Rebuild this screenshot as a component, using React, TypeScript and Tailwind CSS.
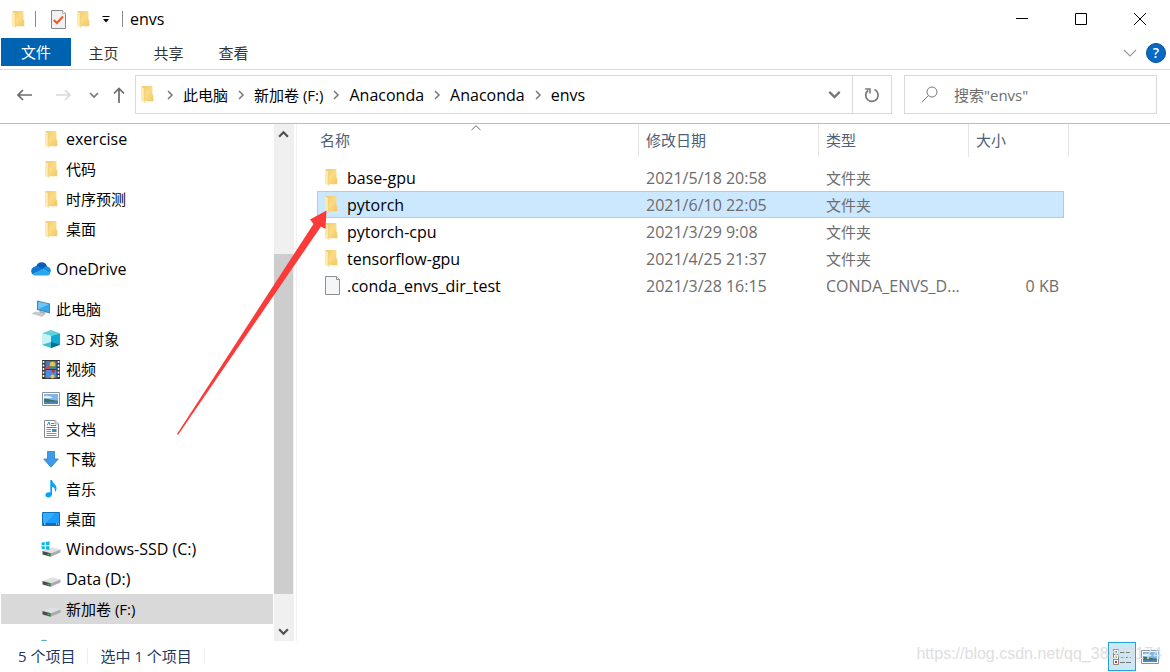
import type { ReactNode } from "react";
import clsx from "clsx";

type IconProps = { className?: string };

function FolderIcon({ className }: IconProps) {
  return (
    <svg className={clsx("shrink-0", className)} width="13" height="17" viewBox="0 0 13 17" aria-hidden="true">
      <defs>
        <linearGradient id="folder-body" x1="0" y1="0" x2="1" y2="1">
          <stop offset="0" stopColor="#efc968" />
          <stop offset="0.5" stopColor="#fbdb85" />
          <stop offset="1" stopColor="#f0c862" />
        </linearGradient>
      </defs>
      <path d="M0.5 0H11.4V8.6L12.3 9.6V15.3H3.5Z" fill="url(#folder-body)" />
      <path d="M0 0.4L3.4 2.6V11L3.8 16.8L0 14.9Z" fill="#ffe9ae" />
      <path d="M3.4 2.6V11L3.8 16.8" fill="none" stroke="#eac566" strokeWidth="0.5" />
    </svg>
  );
}

function FileIcon() {
  return (
    <svg className="shrink-0" width="15" height="19" viewBox="0 0 15 19" aria-hidden="true">
      <path d="M0.5 0.5H11.5L14.5 3.5V18.5H0.5Z" fill="#f5f6f7" stroke="#8f8f8f" />
      <path d="M11.5 0.5V3.5H14.5" fill="#fff" stroke="#8f8f8f" />
    </svg>
  );
}

function PropertiesIcon() {
  return (
    <svg width="15" height="19" viewBox="0 0 15 19" aria-hidden="true">
      <path d="M0.5 0.5H11.5L14.5 3.5V18.5H0.5Z" fill="#f0f1f4" stroke="#888" />
      <path d="M11.5 0.5V3.5H14.5" fill="#fff" stroke="#999" strokeWidth="0.8" />
      <path d="M2.7 10L5.8 13L12 6.5" fill="none" stroke="#f0561d" strokeWidth="2" />
    </svg>
  );
}

function OneDriveIcon() {
  return (
    <svg width="20" height="14" viewBox="0 0 20 14" aria-hidden="true">
      <path d="M5 5C5.6 2 8 0.3 10.7 0.3C13.4 0.3 15.2 1.8 16 4.4L10.5 8Z" fill="#0a5db5" />
      <path d="M6 4.2C2.7 4 0.2 6.2 0.2 9C0.2 10.4 0.7 11.5 1.5 12.3L12.5 7.5C10.5 5.7 8.5 4.5 6 4.2Z" fill="#0f78d4" />
      <path d="M11.8 7C13.2 4.8 15 4 16.4 4.4C18.6 5 19.9 6.7 19.9 8.9L18.8 11.5Z" fill="#1490df" />
      <path d="M1.5 12.3L11.6 7L19.3 11.4C18.7 12.9 17.5 13.5 16 13.5H4.5C3.2 13.5 2.2 13.1 1.5 12.3Z" fill="#28a8ea" />
    </svg>
  );
}

function ThisPcIcon() {
  return (
    <svg width="20" height="18" viewBox="0 0 20 18" aria-hidden="true">
      <path d="M6 0.5L19 3.5V13.5L6 10Z" fill="#667b8d" />
      <path d="M7 1.7L18 4.3V12.3L7 9.2Z" fill="#35a7f0" />
      <path d="M7 1.7L18 4.3L7 9.2Z" fill="#6cc4f7" />
      <path d="M9 10.8L15 12.5L13 14.5L7 13Z" fill="#a8b1b8" />
      <path d="M0 13.5L5 11.5L15 14.5L10.5 17Z" fill="#d3d8dc" />
      <path d="M2 13.5L5.5 12.3M4.5 14.3L8 13M7 15.2L10.5 13.8M9.5 16L13 14.5" stroke="#9da6ad" strokeWidth="0.6" />
    </svg>
  );
}

function CubeIcon() {
  return (
    <svg width="18" height="18" viewBox="0 0 18 18" aria-hidden="true">
      <path d="M0 3.2L9 0L18 3.2L9 6Z" fill="#5fd0dc" />
      <path d="M0 3.2L9 6V18L0 14.7Z" fill="#c5f3f5" />
      <path d="M18 3.2L9 6V18L18 14.7Z" fill="#0fa9d2" />
      <path d="M9 12L18 14.7L9 18Z" fill="#07708d" />
      <path d="M9 12L0 14.7L9 18Z" fill="#46bdcb" />
    </svg>
  );
}

function VideoIcon() {
  return (
    <svg width="18" height="19" viewBox="0 0 18 19" aria-hidden="true">
      <path d="M0 0H18V19H0Z" fill="#3a3a3a" />
      <path d="M3.5 1H14.5V9H3.5Z" fill="#3f79d6" />
      <path d="M3.5 10H14.5V18H3.5Z" fill="#4b8be0" />
      <path
        d="M1.5 1V18M16.5 1V18"
        stroke="#f3f3f3"
        strokeWidth="1.6"
        strokeDasharray="2 1.5"
      />
      <circle cx="10.5" cy="4.5" r="2.8" fill="#e9c53e" />
      <path d="M8 6.3H13L11.2 9H9.6Z" fill="#3e9249" />
      <path d="M3.5 7L7 5.5L8 9H3.5Z" fill="#d9474c" />
      <path d="M9.5 10H13L12 13H10.5Z" fill="#c3333c" />
      <circle cx="10.5" cy="16.5" r="2" fill="#e9c53e" />
    </svg>
  );
}

function PictureIcon() {
  return (
    <svg width="18" height="14" viewBox="0 0 18 14" aria-hidden="true">
      <path d="M0.5 0.5H17.5V13.5H0.5Z" fill="#fff" stroke="#8d9499" />
      <path d="M2 2H16V12H2Z" fill="#7fb5ec" />
      <path d="M2 4.5C5 3.2 8 4 11 6C8 6.3 5 6 2 6.8Z" fill="#e7f3fd" />
      <path d="M2 6.5C5 6.5 8 8 16 8.7V10H2Z" fill="#3d7060" />
      <path d="M2 9.7H16V12H2Z" fill="#4a86bd" />
    </svg>
  );
}

function DocumentIcon() {
  return (
    <svg width="15" height="18" viewBox="0 0 15 18" aria-hidden="true">
      <path d="M0.5 0.5H11L14.5 4V17.5H0.5Z" fill="#fff" stroke="#858b90" />
      <path d="M11 0.5V4H14.5" fill="#eee" stroke="#858b90" strokeWidth="0.8" />
      <path d="M3 5.5L5 2L6 5.5M7 3.5H10M7 5.5H12" stroke="#2b8fd0" fill="none" />
      <path d="M2.5 7.5H12.5" stroke="#2b8fd0" />
      <path d="M2.5 9.5H7M2.5 11.5H7M2.5 13.5H12.5M2.5 15.5H12.5" stroke="#8b9196" />
      <path d="M8 9H12.5V12H8Z" fill="#3c8fbe" />
    </svg>
  );
}

function DownloadIcon() {
  return (
    <svg width="16" height="17" viewBox="0 0 16 17" aria-hidden="true">
      <path d="M4.5 0.5H11.5V8H15.3L8 16.2L0.7 8H4.5Z" fill="#3d9bec" stroke="#2a7dc9" strokeWidth="0.8" />
    </svg>
  );
}

function MusicIcon() {
  return (
    <svg width="12" height="18" viewBox="0 0 12 18" aria-hidden="true">
      <path
        d="M5.3 0H7C7.3 3.2 11.5 4.2 11.5 8.2C11.5 10 10.9 11.2 9.8 12.5C10.6 9.5 9.8 7.6 7 6.8V14.2C7 16 5.4 17.4 3.3 17.4C1.6 17.4 0.4 16.5 0.4 15.1C0.4 13.5 1.8 12.2 3.7 12.2C4.4 12.2 4.9 12.3 5.3 12.6Z"
        fill="#0aa0f5"
      />
    </svg>
  );
}

function DesktopIcon() {
  return (
    <svg width="18" height="14" viewBox="0 0 18 14" aria-hidden="true">
      <path d="M0.5 0.5H17.5V13.5H0.5Z" fill="#1a9dfb" stroke="#0a72b8" />
      <path d="M1 1H13L4 11H1Z" fill="#37adff" />
      <path d="M1 11H17V13H1Z" fill="#0f6cae" />
      <path d="M2 12H3.5M14 12H15M16 12H17" stroke="#fff" />
    </svg>
  );
}

function DriveIcon({ system = false }: { system?: boolean }) {
  return (
    <svg width="20" height="16" viewBox="0 0 20 16" aria-hidden="true">
      <path d="M1.5 10L11 6.4L19.5 8.4L9.8 12.2Z" fill="#dfe0e1" />
      <path d="M1.5 10L9.8 12.2V15.8L1.5 13.4Z" fill="#4a4d50" />
      <path d="M9.8 12.2L19.5 8.4V11.6L9.8 15.8Z" fill="#a9abad" />
      <path d="M6.5 12.8H8.5V14.2H6.5Z" fill="#3ecf5b" />
      {system && (
        <>
          <path d="M0 0H9V9H0Z" fill="#fff" />
          <path d="M0.5 1.5L3.8 1V4.2H0.5ZM4.8 0.9L8.5 0.3V4.2H4.8ZM0.5 5.2H3.8V8.3L0.5 7.8ZM4.8 5.2H8.5V9L4.8 8.4Z" fill="#14b4f0" />
        </>
      )}
    </svg>
  );
}

function NetworkIcon() {
  return (
    <svg width="20" height="20" viewBox="0 0 20 20" aria-hidden="true">
      <circle cx="13" cy="7" r="6.2" fill="#5ba9c9" />
      <path d="M9 5C11 3 15 3 17 5" fill="none" stroke="#b7dbe8" />
      <path d="M1 9H12V17H1Z" fill="#35a7f0" stroke="#667b8d" />
    </svg>
  );
}

function Chevron({ dir, className, size = 10 }: { dir: "up" | "down" | "right"; className?: string; size?: number }) {
  const d = {
    up: "M1 7L5 3L9 7",
    down: "M1 3L5 7L9 3",
    right: "M3 1L7 5L3 9",
  }[dir];
  return (
    <svg className={className} width={size} height={size} viewBox="0 0 10 10" fill="none" stroke="currentColor" aria-hidden="true">
      <path d={d} />
    </svg>
  );
}

type TreeItem = { label: string; icon: ReactNode; latin?: boolean; selected?: boolean };

const QUICK_ACCESS: TreeItem[] = [
  { label: "exercise", icon: <FolderIcon />, latin: true },
  { label: "代码", icon: <FolderIcon /> },
  { label: "时序预测", icon: <FolderIcon /> },
  { label: "桌面", icon: <FolderIcon /> },
];

const THIS_PC: TreeItem[] = [
  { label: "3D 对象", icon: <CubeIcon /> },
  { label: "视频", icon: <VideoIcon /> },
  { label: "图片", icon: <PictureIcon /> },
  { label: "文档", icon: <DocumentIcon /> },
  { label: "下载", icon: <DownloadIcon /> },
  { label: "音乐", icon: <MusicIcon /> },
  { label: "桌面", icon: <DesktopIcon /> },
  { label: "Windows-SSD (C:)", icon: <DriveIcon system />, latin: true },
  { label: "Data (D:)", icon: <DriveIcon />, latin: true },
  { label: "新加卷 (F:)", icon: <DriveIcon />, selected: true },
];

const FILES = [
  { name: "base-gpu", date: "2021/5/18 20:58", type: "文件夹", size: "", folder: true },
  { name: "pytorch", date: "2021/6/10 22:05", type: "文件夹", size: "", folder: true, selected: true },
  { name: "pytorch-cpu", date: "2021/3/29 9:08", type: "文件夹", size: "", folder: true },
  { name: "tensorflow-gpu", date: "2021/4/25 21:37", type: "文件夹", size: "", folder: true },
  { name: ".conda_envs_dir_test", date: "2021/3/28 16:15", type: "CONDA_ENVS_D...", size: "0 KB", folder: false },
];

const CRUMBS = [
  { label: "此电脑" },
  { label: "新加卷 (F:)" },
  { label: "Anaconda", latin: true },
  { label: "Anaconda", latin: true },
  { label: "envs", latin: true },
];

function TreeRow({ item, root = false }: { item: TreeItem; root?: boolean }) {
  return (
    <button
      type="button"
      className={clsx(
        "flex h-[30px] w-full shrink-0 items-center gap-[5px] text-left whitespace-nowrap",
        root ? "pl-[30px]" : "pl-10",
        item.latin && "text-base leading-5",
        item.selected && "bg-[#d9d9d9]",
      )}
    >
      <span className="flex w-5 shrink-0 items-center justify-center">{item.icon}</span>
      {item.label}
    </button>
  );
}

function TitleBar() {
  return (
    <header className="flex h-[38px] shrink-0 items-center justify-between pr-px pl-3">
      <div className="flex items-center">
        <FolderIcon />
        <span className="ml-[10px] h-4 w-px bg-[#8a8a8a]" />
        <button type="button" aria-label="属性" className="ml-[15px]">
          <PropertiesIcon />
        </button>
        <button type="button" aria-label="新建文件夹" className="ml-[11px]">
          <FolderIcon />
        </button>
        <button type="button" aria-label="自定义快速访问工具栏" className="ml-3">
          <svg width="8" height="8" viewBox="0 0 8 8" aria-hidden="true">
            <path d="M0.5 1.5H7.5" stroke="#000" />
            <path d="M1 4H7L4 7.5Z" />
          </svg>
        </button>
        <span className="ml-3 h-4 w-px bg-[#8a8a8a]" />
        <h1 className="ml-[7px] text-base leading-5">envs</h1>
      </div>
      <div className="flex h-full">
        <button type="button" aria-label="最小化" className="flex w-[59px] items-center justify-center">
          <svg width="12" height="12" viewBox="0 0 12 12">
            <path d="M0 5.5H12" stroke="#000" />
          </svg>
        </button>
        <button type="button" aria-label="最大化" className="flex w-[59px] items-center justify-center">
          <svg width="12" height="12" viewBox="0 0 12 12">
            <path d="M0.5 0.5H11.5V11.5H0.5Z" fill="none" stroke="#000" />
          </svg>
        </button>
        <button type="button" aria-label="关闭" className="flex w-[59px] items-center justify-center">
          <svg width="12" height="12" viewBox="0 0 12 12">
            <path d="M0 0L12 12M12 0L0 12" stroke="#000" />
          </svg>
        </button>
      </div>
    </header>
  );
}

function RibbonTabs() {
  return (
    <div className="flex h-8 shrink-0 items-start justify-between border-b border-[#dadbdc] pr-1 pl-px">
      <div className="flex">
        <button type="button" className="h-7 w-[70px] bg-[#0063b1] text-white">
          文件
        </button>
        {["主页", "共享", "查看"].map((tab) => (
          <button key={tab} type="button" className="h-[30px] w-[65px] text-[#333]">
            {tab}
          </button>
        ))}
      </div>
      <div className="flex h-[30px] items-center gap-[9px]">
        <button type="button" aria-label="展开功能区">
          <svg width="14" height="8" viewBox="0 0 14 8" fill="none" aria-hidden="true">
            <path d="M1 1L7 7L13 1" stroke="#9a9a9a" strokeWidth="1.2" />
          </svg>
        </button>
        <button
          type="button"
          aria-label="帮助"
          className="flex size-5 items-center justify-center rounded-full border border-[#064f96] bg-[#0669c4] text-sm font-semibold text-white"
        >
          ?
        </button>
      </div>
    </div>
  );
}

function AddressRow() {
  return (
    <div className="flex h-[54px] shrink-0 items-center border-b border-[#bdbdbd] pt-[5px] pr-[13px] pb-[9px] pl-1">
      <button type="button" aria-label="后退" className="flex w-10 justify-center text-[#6b6b6b]">
        <svg width="15" height="12" viewBox="0 0 15 12" fill="none" stroke="currentColor" strokeWidth="1.7">
          <path d="M15 6H1M6 1L1 6L6 11" />
        </svg>
      </button>
      <button type="button" aria-label="前进" className="flex w-[38px] justify-center text-[#d9d9d9]">
        <svg width="15" height="12" viewBox="0 0 15 12" fill="none" stroke="currentColor" strokeWidth="1.7">
          <path d="M0 6H14M9 1L14 6L9 11" />
        </svg>
      </button>
      <button type="button" aria-label="最近浏览的位置" className="flex w-[23px] justify-center text-[#777]">
        <Chevron dir="down" className="stroke-[1.7]" />
      </button>
      <button type="button" aria-label="上移" className="mr-[2px] flex w-7 justify-center text-[#6b6b6b]">
        <svg width="12" height="16" viewBox="0 0 12 16" fill="none" stroke="currentColor" strokeWidth="1.7">
          <path d="M6 16V1.5M1 6.5L6 1.5L11 6.5" />
        </svg>
      </button>

      <nav className="flex h-[39px] flex-1 items-center border border-[#d9d9d9] pl-[5px]">
        <FolderIcon />
        <ol className="flex flex-1 items-center pl-[3px]">
          {CRUMBS.map((crumb, i) => (
            <li key={i} className="flex items-center">
              <span className="flex w-[26px] justify-center text-[#777]">
                <Chevron dir="right" className="stroke-[1.5]" />
              </span>
              <a href="#" className={clsx(crumb.latin && "text-base leading-5")}>
                {crumb.label}
              </a>
            </li>
          ))}
        </ol>
        <button type="button" aria-label="以前的位置" className="flex w-9 justify-center text-[#777]">
          <Chevron dir="down" size={13} className="stroke-[1.7]" />
        </button>
        <button
          type="button"
          aria-label="刷新"
          className="flex h-full w-[39px] items-center justify-center border-l border-[#d9d9d9] text-[#777]"
        >
          <svg width="16" height="16" viewBox="0 0 16 16" fill="none" stroke="currentColor" strokeWidth="1.7">
            <path d="M10.5 2.6A6.2 6.2 0 1 1 4.2 3.3" />
            <path d="M1.2 1.9H6V6.6" strokeWidth="1.5" />
          </svg>
        </button>
      </nav>

      <label className="ml-3 flex h-[39px] w-[253px] items-center gap-4 border border-[#d9d9d9] pl-4">
        <svg className="shrink-0" width="17" height="17" viewBox="0 0 17 17" fill="none" stroke="#777" aria-hidden="true">
          <circle cx="11" cy="6" r="5" />
          <path d="M7.4 9.6L1 16" />
        </svg>
        <input
          type="text"
          aria-label="搜索"
          placeholder={'搜索"envs"'}
          className="min-w-0 flex-1 outline-none placeholder:text-[#6d6d6d]"
        />
      </label>
    </div>
  );
}

function NavigationPane() {
  return (
    <aside className="flex w-[297px] shrink-0 border-r border-[#f2f2f2] pl-px">
      <div className="flex w-[272px] flex-col overflow-hidden">
        {QUICK_ACCESS.map((item) => (
          <TreeRow key={item.label} item={item} />
        ))}
        <div className="mt-[10px] shrink-0">
          <TreeRow root item={{ label: "OneDrive", icon: <OneDriveIcon />, latin: true }} />
        </div>
        <div className="mt-[10px] shrink-0">
          <TreeRow root item={{ label: "此电脑", icon: <ThisPcIcon /> }} />
          {THIS_PC.map((item) => (
            <TreeRow key={item.label} item={item} />
          ))}
        </div>
        <div className="mt-[10px] shrink-0">
          <TreeRow root item={{ label: "", icon: <NetworkIcon /> }} />
        </div>
      </div>
      <div className="ml-px flex w-5 flex-col bg-[#f0f0f0] text-[#505050]">
        <button type="button" aria-label="向上滚动" className="mr-px flex h-5 items-center justify-center">
          <Chevron dir="up" size={11} className="stroke-2" />
        </button>
        <div className="flex flex-1 flex-col">
          <div className="flex-110" />
          <div className="mr-px flex-340 bg-[#cdcdcd]" />
          <div className="flex-27" />
        </div>
        <button type="button" aria-label="向下滚动" className="mr-px flex h-5 items-center justify-center">
          <Chevron dir="down" size={11} className="stroke-2" />
        </button>
      </div>
    </aside>
  );
}

function FileList() {
  const head = "flex h-[33px] items-center border-r border-[#e5e5e5] pb-[2px]";

  return (
    <main className="min-w-0 flex-1 overflow-hidden pl-[15px]">
      <table className="w-[757px] table-fixed border-separate border-spacing-0">
        <colgroup>
          <col className="w-[5px]" />
          <col className="w-[322px]" />
          <col className="w-[180px]" />
          <col className="w-[150px]" />
          <col className="w-[95px]" />
          <col className="w-[5px]" />
        </colgroup>
        <thead className="text-left text-[#4c607a]">
          <tr>
            <th colSpan={2} className="relative p-0 pb-[7px] font-normal">
              <div className={clsx(head, "pl-2")}>名称</div>
              <svg className="absolute top-px left-1/2 -translate-x-1/2" width="11" height="6" viewBox="0 0 11 6" fill="none" aria-hidden="true">
                <path d="M1 5L5.5 0.7L10 5" stroke="#707070" />
              </svg>
            </th>
            <th className="p-0 pb-[7px] font-normal">
              <div className={clsx(head, "pl-[7px]")}>修改日期</div>
            </th>
            <th className="p-0 pb-[7px] font-normal">
              <div className={clsx(head, "pl-[7px]")}>类型</div>
            </th>
            <th colSpan={2} className="p-0 pb-[7px] font-normal">
              <div className={clsx(head, "pl-[7px]")}>大小</div>
            </th>
          </tr>
        </thead>
        <tbody>
          {FILES.map((file) => {
            const cell = clsx(
              "h-[27px] border-y p-0 whitespace-nowrap",
              file.selected ? "border-[#99d1ff] bg-[#cce8ff]" : "border-transparent",
            );
            return (
              <tr key={file.name} className="text-[#6d6d6d]">
                <td className="p-0" />
                <td className={clsx(cell, "border-l text-base leading-5 text-black")}>
                  <div className="flex items-center gap-[7px] pl-[7px]">
                    <span className="flex w-[15px]">{file.folder ? <FolderIcon /> : <FileIcon />}</span>
                    {file.name}
                  </div>
                </td>
                <td className={clsx(cell, "pl-[7px] text-base leading-5")}>{file.date}</td>
                <td className={clsx(cell, "pl-[7px]", !file.folder && "text-base leading-5")}>{file.type}</td>
                <td className={clsx(cell, "border-r pr-1 text-right text-base leading-5")}>{file.size}</td>
                <td className="p-0" />
              </tr>
            );
          })}
        </tbody>
      </table>
    </main>
  );
}

function StatusBar() {
  return (
    <footer className="relative flex h-[31px] shrink-0 items-center justify-between pr-[11px] pl-[18px] text-[#1e395b]">
      <div className="flex items-center gap-3 pb-[2px]">
        <span>5 个项目</span>
        <span className="h-4 w-px bg-[#eee]" />
        <span>选中 1 个项目</span>
        <span className="h-4 w-px bg-[#eee]" />
      </div>
      <div className="flex items-center gap-[5px]">
        <button
          type="button"
          aria-label="详细信息"
          className="flex h-[29px] w-7 items-center justify-center border border-[#26a0da] bg-[#cbe8f6]"
        >
          <svg width="18" height="16" viewBox="0 0 18 16" aria-hidden="true">
            <path d="M0.5 0.5H5.5V15.5H0.5ZM0.5 5.5H5.5M0.5 10.5H5.5" fill="#fff" stroke="#888" />
            <path d="M2 3H4" stroke="#4a90c0" strokeWidth="2" />
            <path d="M2 8H4" stroke="#5c9a6a" strokeWidth="2" />
            <path d="M2 13H4" stroke="#c03a2b" strokeWidth="2" />
            <path d="M7 3.5H12M13 3.5H18M7 8.5H12M13 8.5H18M7 13.5H12M13 13.5H18" stroke="#777" />
          </svg>
        </button>
        <button type="button" aria-label="大缩略图">
          <PictureIcon />
        </button>
      </div>
      <span className="pointer-events-none absolute right-2 bottom-[6px] font-['Liberation_Sans',sans-serif] text-base text-[#dedede]">
        https://blog.csdn.net/qq_38603174
      </span>
    </footer>
  );
}

// Red pointer drawn over the panes, aimed at the selected folder
function Pointer() {
  return (
    <svg
      className="pointer-events-none absolute top-[210px] left-[176px]"
      width="152"
      height="226"
      viewBox="176 210 152 226"
      aria-hidden="true"
    >
      <path d="M177 434L313.5 224L310 219.5L326.5 210.5L325.5 229L321 226.5L178 435Z" fill="#fb3a3a" />
    </svg>
  );
}

export default function App() {
  return (
    <div className="relative flex h-screen flex-col overflow-hidden bg-white font-['Open_Sans','Noto_Sans_CJK_SC',sans-serif] text-[15px] leading-5 text-black">
      <TitleBar />
      <RibbonTabs />
      <AddressRow />
      <div className="flex min-h-0 flex-1">
        <NavigationPane />
        <FileList />
      </div>
      <StatusBar />
      <Pointer />
    </div>
  );
}
